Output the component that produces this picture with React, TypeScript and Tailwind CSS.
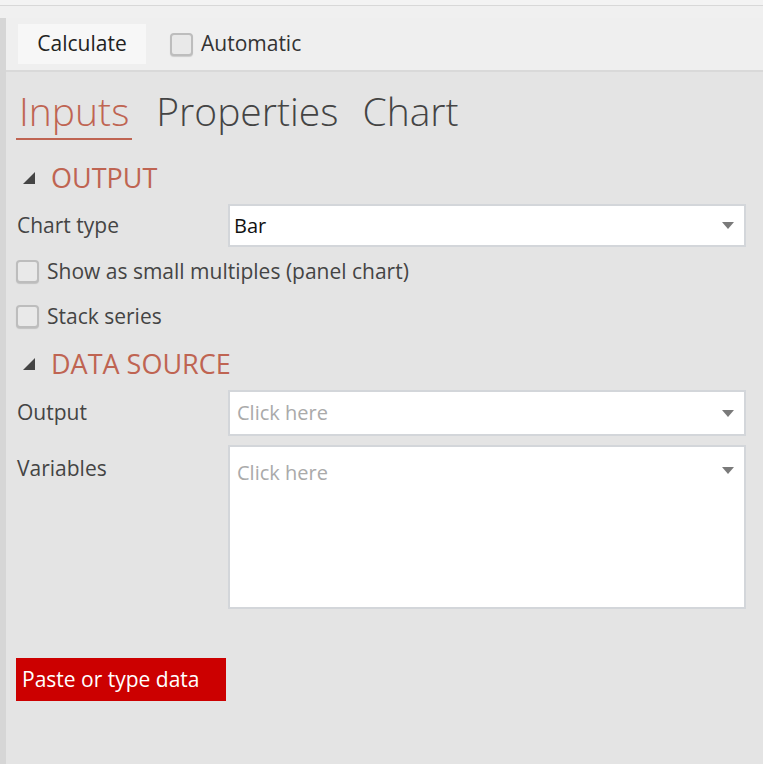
const Caret = () => (
  <svg width="12" height="7" viewBox="0 0 12 7" className="shrink-0">
    <path d="M0 0h12L6 7z" fill="#7a7a7a" />
  </svg>
);

const Tri = () => (
  <svg width="12" height="12" viewBox="0 0 12 12" className="shrink-0">
    <path d="M12 0v12H0z" fill="#444" />
  </svg>
);

const Box = () => (
  <span className="inline-block h-[23px] w-[23px] shrink-0 rounded-[4px] border-2 border-[#bdbdbd] bg-[#e9e9e9] shadow-[0_1px_1px_rgba(0,0,0,0.15)]" />
);

const font = { fontFamily: '"Open Sans", "Noto Sans", sans-serif' };

export default function App() {
  return (
    <div className="h-[764px] w-[763px] overflow-hidden bg-[#f0f0f0]" style={font}>
      <div className="h-[6px] border-b border-[#d8d8d8] bg-[#f3f3f3]" />
      <div className="h-[12px] bg-[#f0f0f0]" />
      <div className="flex h-[746px]">
        <div className="w-[6px] bg-[#d6d6d6]" />
        <div className="flex flex-1 flex-col">
          <div className="flex h-[54px] items-center gap-[24px] border-b-2 border-[#d9d9d9] bg-[#efefef] pl-3">
            <button className="h-[40px] w-[128px] bg-[#f7f7f7] text-[21px] text-[#222]">Calculate</button>
            <label className="flex items-center gap-2 text-[21px] text-[#333]">
              <Box />
              Automatic
            </label>
          </div>
          <div className="flex-1 bg-[#e4e4e4] pl-[10px] pr-[17px]">
            <div className="mt-[14px] flex gap-6 text-[39px] font-light leading-[50px]">
              <span className="border-b-2 border-[#bf6452] pb-[2px] pl-[3px] pr-[3px] text-[#bf6452]">Inputs</span>
              <span className="text-[#444]">Properties</span>
              <span className="text-[#444]">Chart</span>
            </div>
            <div className="mt-[20px] flex items-center gap-[16px] pl-[7px] text-[27px] leading-[36px] text-[#bf6452]">
              <Tri />
              OUTPUT
            </div>
            <div className="mt-[8px] flex items-center">
              <span className="w-[212px] pl-[1px] text-[21px] text-[#444]">Chart type</span>
              <div className="flex h-[43px] flex-1 items-center justify-between border-2 border-[#d3d6da] bg-white pl-[4px] pr-[10px] text-[20px] text-[#111]">
                Bar
                <Caret />
              </div>
            </div>
            <div className="mt-[9px] flex flex-col gap-[13px] text-[21px] text-[#444]">
              <label className="flex items-center gap-[8px]"><Box />Show as small multiples (panel chart)</label>
              <label className="flex items-center gap-[8px]"><Box />Stack series</label>
            </div>
            <div className="mt-[14px] flex items-center gap-[16px] pl-[7px] text-[27px] leading-[36px] text-[#bf6452]">
              <Tri />
              DATA SOURCE
            </div>
            <div className="mt-[8px] flex items-center">
              <span className="w-[212px] pl-[1px] text-[21px] text-[#444]">Output</span>
              <div className="flex h-[46px] flex-1 items-center justify-between border-2 border-[#d3d6da] bg-white pl-[7px] pr-[10px] text-[20px] text-[#aaa]">
                Click here
                <Caret />
              </div>
            </div>
            <div className="mt-[9px] flex items-start">
              <span className="mt-[8px] w-[212px] pl-[1px] text-[21px] text-[#444]">Variables</span>
              <div className="flex h-[164px] flex-1 items-start justify-between border-2 border-[#d3d6da] bg-white pl-[7px] pr-[10px] pt-[11px] text-[20px] text-[#aaa]">
                Click here
                <span className="mt-[9px]"><Caret /></span>
              </div>
            </div>
            <button className="mt-[49px] flex h-[43px] w-[210px] items-center bg-[#cc0000] pl-[6px] text-[21px] text-white">
              Paste or type data
            </button>
          </div>
        </div>
      </div>
    </div>
  );
}
